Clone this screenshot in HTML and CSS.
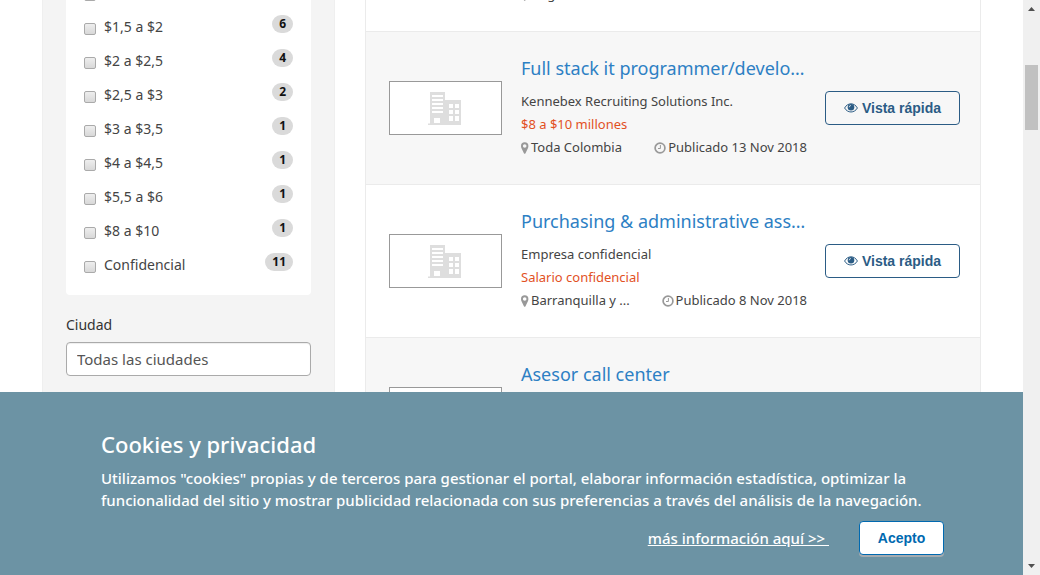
FILE: index.html
```html
<!DOCTYPE html>
<html lang="es">
<head>
<meta charset="utf-8">
<title>Ofertas de empleo</title>
<link rel="stylesheet" href="styles.css">
</head>
<body>
<svg class="sprite" aria-hidden="true">
  <symbol id="building" viewBox="0 0 35 35">
    <path fill="#dedede" fill-rule="evenodd" d="M2 1H17V9H33V34H0V32.500H2ZM4 4V6H15V4ZM4 8V10H15V8ZM4 12V14H15V12ZM4 16V18H15V16ZM4 20V22H15V20ZM6 27V32H12V27ZM21 13V17H25V13ZM27 13V17H31V13ZM21 19V23H25V19ZM27 19V23H31V19ZM21 25V30H25V25ZM27 25V30H31V25Z"/>
  </symbol>
  <symbol id="pin" viewBox="0 0 8 12">
    <path fill="#999" fill-rule="evenodd" d="M3.700 0.300A3.700 3.700 0 0 1 7.400 4C7.400 5 7.200 5.500 6.900 6.200L4.500 11.200Q3.700 12.200 2.900 11.200L0.500 6.200C0.200 5.500 0 5 0 4A3.700 3.700 0 0 1 3.700 0.300ZM3.700 2.200A1.800 1.800 0 1 0 3.700 5.800A1.800 1.800 0 1 0 3.700 2.200Z"/>
  </symbol>
  <symbol id="clock" viewBox="0 0 12 12">
    <circle cx="6" cy="6" r="4.900" fill="none" stroke="#999" stroke-width="1.700"/>
    <path d="M6.400 3V6.500H4" fill="none" stroke="#999" stroke-width="1"/>
  </symbol>
  <symbol id="eye" viewBox="0 0 14 10">
    <path d="M0.600 5C3.600 -0.600 10.400 -0.600 13.400 5C10.400 10.300 3.600 10.300 0.600 5Z" fill="none" stroke="#2b5c85" stroke-width="1"/>
    <circle cx="7" cy="4.300" r="3.300" fill="#2b5c85"/>
    <path d="M5.200 4.300A1.800 1.800 0 0 1 7 2.500" fill="none" stroke="#fff" stroke-width="0.700"/>
  </symbol>
</svg>
<div class="window">
  <div class="page">
    <div class="container">
      <aside class="sidebar">
        <ul class="filters">
          <li><label><input type="checkbox"><span>$1 a $1,5</span></label><span class="badge">3</span></li>
          <li><label><input type="checkbox"><span>$1,5 a $2</span></label><span class="badge">6</span></li>
          <li><label><input type="checkbox"><span>$2 a $2,5</span></label><span class="badge">4</span></li>
          <li><label><input type="checkbox"><span>$2,5 a $3</span></label><span class="badge">2</span></li>
          <li><label><input type="checkbox"><span>$3 a $3,5</span></label><span class="badge">1</span></li>
          <li><label><input type="checkbox"><span>$4 a $4,5</span></label><span class="badge">1</span></li>
          <li><label><input type="checkbox"><span>$5,5 a $6</span></label><span class="badge">1</span></li>
          <li><label><input type="checkbox"><span>$8 a $10</span></label><span class="badge">1</span></li>
          <li><label><input type="checkbox"><span>Confidencial</span></label><span class="badge">11</span></li>
        </ul>
        <label class="field-label" for="city">Ciudad</label>
        <select id="city" class="select"><option>Todas las ciudades</option></select>
      </aside>
      <main class="offers">
        <article class="offer">
          <div class="thumb"><svg width="35" height="35"><use href="#building"/></svg></div>
          <div class="info">
            <h2><a href="#">Auxiliar contable</a></h2>
            <p>Empresa confidencial</p>
            <p class="salary">Salario confidencial</p>
            <p class="meta"><span><svg width="8" height="12"><use href="#pin"/></svg>Bogotá</span></p>
          </div>
          <button class="quick" type="button"><svg width="14" height="10"><use href="#eye"/></svg>Vista rápida</button>
        </article>
        <article class="offer shaded">
          <div class="thumb"><svg width="35" height="35"><use href="#building"/></svg></div>
          <div class="info">
            <h2><a href="#">Full stack it programmer/develo…</a></h2>
            <p>Kennebex Recruiting Solutions Inc.</p>
            <p class="salary">$8 a $10 millones</p>
            <p class="meta"><span><svg width="8" height="12"><use href="#pin"/></svg>Toda Colombia</span><span><svg width="12" height="12"><use href="#clock"/></svg>Publicado 13 Nov 2018</span></p>
          </div>
          <button class="quick" type="button"><svg width="14" height="10"><use href="#eye"/></svg>Vista rápida</button>
        </article>
        <article class="offer">
          <div class="thumb"><svg width="35" height="35"><use href="#building"/></svg></div>
          <div class="info">
            <h2><a href="#">Purchasing &amp; administrative ass…</a></h2>
            <p>Empresa confidencial</p>
            <p class="salary">Salario confidencial</p>
            <p class="meta"><span><svg width="8" height="12"><use href="#pin"/></svg>Barranquilla y ...</span><span><svg width="12" height="12"><use href="#clock"/></svg>Publicado 8 Nov 2018</span></p>
          </div>
          <button class="quick" type="button"><svg width="14" height="10"><use href="#eye"/></svg>Vista rápida</button>
        </article>
        <article class="offer shaded">
          <div class="thumb"><svg width="35" height="35"><use href="#building"/></svg></div>
          <div class="info">
            <h2><a href="#">Asesor call center</a></h2>
          </div>
        </article>
      </main>
    </div>
  </div>
  <div class="scrollbar" aria-hidden="true">
    <svg width="7" height="4"><path d="M0 4L3.500 0L7 4Z" fill="#505050"/></svg>
    <div class="track"><div class="grip"></div></div>
    <svg width="7" height="4"><path d="M0 0L3.500 4L7 0Z" fill="#505050"/></svg>
  </div>
</div>
<section class="cookies" aria-label="Cookies y privacidad">
  <h2>Cookies y privacidad</h2>
  <p>Utilizamos "cookies" propias y de terceros para gestionar el portal, elaborar información estadística, optimizar la<br>funcionalidad del sitio y mostrar publicidad relacionada con sus preferencias a través del análisis de la navegación.</p>
  <div class="actions">
    <a href="#">más información aquí &gt;&gt;&nbsp;</a>
    <button type="button">Acepto</button>
  </div>
</section>
</body>
</html>
```
FILE: styles.css
```css
* { box-sizing: border-box; }

body {
  margin: 0;
  background: #fff;
  color: #444;
  font-family: "Noto Sans", "Open Sans", sans-serif;
  font-size: 13px;
}

h2, p, ul { margin: 0; padding: 0; }
svg { flex: none; }
.sprite { position: absolute; width: 0; height: 0; }

.window { display: flex; height: 100vh; overflow: hidden; }
.page { flex: 1; min-width: 0; overflow: hidden; }

.container {
  display: flex;
  align-items: stretch;
  gap: 30px;
  max-width: 939px;
  margin: 0 auto;
}

/* Filters */
.sidebar {
  width: 293px;
  margin-top: -24px;
  padding: 0 24px 40px;
  border: 1px solid #efefef;
  border-width: 0 1px;
  padding: 0 23px 40px;
  background: #f4f4f4;
}

.filters {
  list-style: none;
  padding: 0 18px 13px;
  background: #fff;
  border-radius: 0 0 4px 4px;
}

.filters li {
  display: flex;
  justify-content: space-between;
  height: 34px;
}

.filters label {
  display: flex;
  align-items: center;
  gap: 8px;
  font-size: 14px;
}

.filters label span { padding-bottom: 2px; }

.filters input {
  appearance: none;
  width: 12px;
  height: 12px;
  margin: 4px 0 0;
  border: 1px solid #aaa;
  border-radius: 2px;
  background: linear-gradient(#eee, #d8d8d8);
}

.badge {
  height: 18px;
  margin-top: 5px;
  padding: 0 7px;
  border-radius: 9px;
  background: #dadada;
  color: #111;
  font-size: 12px;
  font-weight: 700;
  line-height: 18px;
}

.field-label {
  display: block;
  margin-top: 20px;
  color: #333;
  font-size: 14px;
  line-height: 20px;
}

.select {
  appearance: none;
  display: block;
  width: 100%;
  height: 34px;
  margin-top: 7px;
  padding: 0 10px;
  border: 1px solid #aaa;
  border-radius: 4px;
  background: #fff;
  box-shadow: inset 0 1px 1px #eee;
  color: #555;
  font-family: inherit;
  font-size: 15px;
}

/* Offers */
.offers {
  flex: 1;
  min-width: 0;
  margin-top: -121px;
  border: 1px solid #ebebeb;
  border-width: 0 1px;
}

.offer {
  display: flex;
  align-items: center;
  min-height: 153px;
  padding: 24px 20px 24px 23px;
  border-bottom: 1px solid #ebebeb;
}

.shaded { background: #f7f7f7; }

.thumb {
  display: flex;
  align-items: center;
  justify-content: center;
  width: 113px;
  height: 54px;
  margin-right: 19px;
  border: 1px solid #999;
  background: #fff;
}

.info { flex: 1; min-width: 0; min-height: 104px; margin-right: 18px; }

.info h2 {
  margin-bottom: 10px;
  font-size: 18px;
  font-weight: 400;
  line-height: 24px;
  white-space: nowrap;
}

.info a { color: #2d80c4; text-decoration: none; }
.info p { line-height: 23px; }
.info .salary { color: #e2511f; }

.meta { display: flex; justify-content: space-between; }
.meta span { display: flex; align-items: center; gap: 2px; white-space: nowrap; }

.quick {
  display: flex;
  align-items: center;
  justify-content: center;
  gap: 4px;
  width: 135px;
  height: 34px;
  padding: 0;
  border: 1px solid #2b5c85;
  border-radius: 4px;
  background: transparent;
  color: #2b5c85;
  font: 700 14px "Liberation Sans", sans-serif;
}

/* Scrollbar */
.scrollbar {
  display: flex;
  flex-direction: column;
  align-items: center;
  width: 17px;
  padding: 7px 2px;
  background: #f0f0f0;
}

.track { flex: 1; width: 100%; padding-top: 54px; }
.grip { height: 65px; background: #c1c1c1; }

/* Cookie notice */
.cookies {
  position: fixed;
  right: 17px;
  bottom: 0;
  left: 0;
  padding: 36px 79px 20px 101px;
  background: #6c93a4;
  color: #fff;
  font-size: 15px;
  font-weight: 500;
  line-height: 22px;
}

.cookies h2 {
  margin-bottom: 6px;
  font-size: 22px;
  font-weight: 500;
  line-height: 33px;
}

.cookies p { white-space: nowrap; }

.actions {
  display: flex;
  align-items: center;
  justify-content: flex-end;
  gap: 30px;
  margin-top: 10px;
}

.actions a { color: #fff; }

.actions button {
  width: 85px;
  height: 34px;
  padding: 0;
  border: 1px solid #0069b0;
  border-radius: 4px;
  background: #fff;
  box-shadow: 0 2px 0 #a5abb0;
  color: #0069b0;
  font: 700 14px "Liberation Sans", sans-serif;
}
```
